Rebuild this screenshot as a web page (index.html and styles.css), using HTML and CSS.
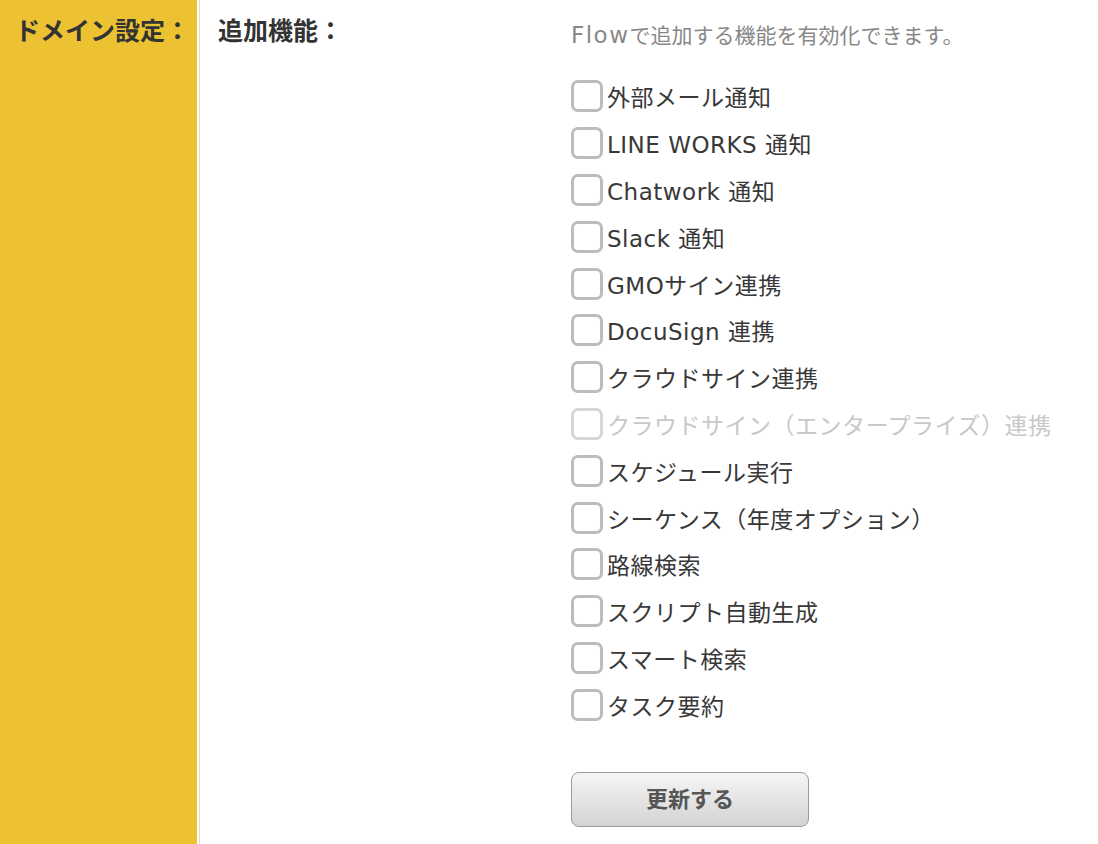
FILE: index.html
```html
<!DOCTYPE html>
<html lang="ja">
<head>
  <meta charset="UTF-8">
  <title>ドメイン設定</title>
  <link rel="stylesheet" href="styles.css">
</head>
<body>

<div class="settings">
  <!-- Left heading column -->
  <div class="side">ドメイン設定：</div>

  <div class="main">
    <div class="label">追加機能：</div>

    <div class="field">
      <p class="note"><span class="brand">Flow</span>で追加する機能を有効化できます。</p>

      <ul class="options">
        <li class="option"><span class="box"></span>外部メール通知</li>
        <li class="option"><span class="box"></span>LINE WORKS 通知</li>
        <li class="option"><span class="box"></span>Chatwork 通知</li>
        <li class="option"><span class="box"></span>Slack 通知</li>
        <li class="option"><span class="box"></span>GMOサイン連携</li>
        <li class="option"><span class="box"></span>DocuSign 連携</li>
        <li class="option"><span class="box"></span>クラウドサイン連携</li>
        <li class="option disabled"><span class="box"></span>クラウドサイン（エンタープライズ）連携</li>
        <li class="option"><span class="box"></span>スケジュール実行</li>
        <li class="option"><span class="box"></span>シーケンス（年度オプション）</li>
        <li class="option"><span class="box"></span>路線検索</li>
        <li class="option"><span class="box"></span>スクリプト自動生成</li>
        <li class="option"><span class="box"></span>スマート検索</li>
        <li class="option"><span class="box"></span>タスク要約</li>
      </ul>

      <button class="submit" type="button">更新する</button>
    </div>
  </div>
</div>

</body>
</html>
```

FILE: styles.css
```css
/* Page base */
body {
  margin: 0;
  font-family: "DejaVu Sans", "Noto Sans CJK JP", sans-serif;
  color: #333;
  background: #fff;
}

.settings {
  display: flex;
  min-height: 844px;
}

/* Yellow heading column */
.side {
  flex: none;
  width: 186px;
  padding: 13px 7px 0 4px;
  background-color: #ecc232;
  font-family: "Noto Sans CJK JP", sans-serif;
  font-size: 25px;
  font-weight: bold;
  line-height: 32px;
  text-align: right;
  white-space: nowrap;
}

.main {
  display: flex;
  flex: 1;
  margin-left: 2px;
  border-left: 1px solid #dcdcdc;
}

.label {
  flex: none;
  width: 353px;
  padding: 13px 0 0 18px;
  font-family: "Noto Sans CJK JP", sans-serif;
  font-size: 25px;
  font-weight: bold;
  line-height: 32px;
}

.field {
  padding-top: 20px;
}

.note {
  margin: 0;
  font-size: 21px;
  line-height: 30px;
  color: #888;
  white-space: nowrap;
}

.brand {
  font-size: 23px;
  letter-spacing: 1.5px;
}

/* Checkbox list */
.options {
  list-style: none;
  margin: 22px 0 0 0;
  padding: 0;
}

.option {
  display: flex;
  align-items: center;
  gap: 4px;
  height: 46.8px;
  font-size: 23px;
  letter-spacing: 0.5px;
  color: #383838;
  white-space: nowrap;
}

.box {
  flex: none;
  width: 26px;
  height: 26px;
  border: 3px solid #bcbcbc;
  border-radius: 7px;
  background: #fff;
}

.disabled {
  color: #c8c8c8;
}

.disabled .box {
  border-color: #d6d6d6;
}

/* Update button */
.submit {
  display: block;
  width: 238px;
  height: 55px;
  margin-top: 44px;
  padding-bottom: 6px;
  border: 1px solid #9a9a9a;
  border-radius: 8px;
  background: linear-gradient(#f6f6f6, #d3d3d3);
  font-family: "Noto Sans CJK JP", sans-serif;
  font-size: 22px;
  font-weight: bold;
  color: #555;
}
```
